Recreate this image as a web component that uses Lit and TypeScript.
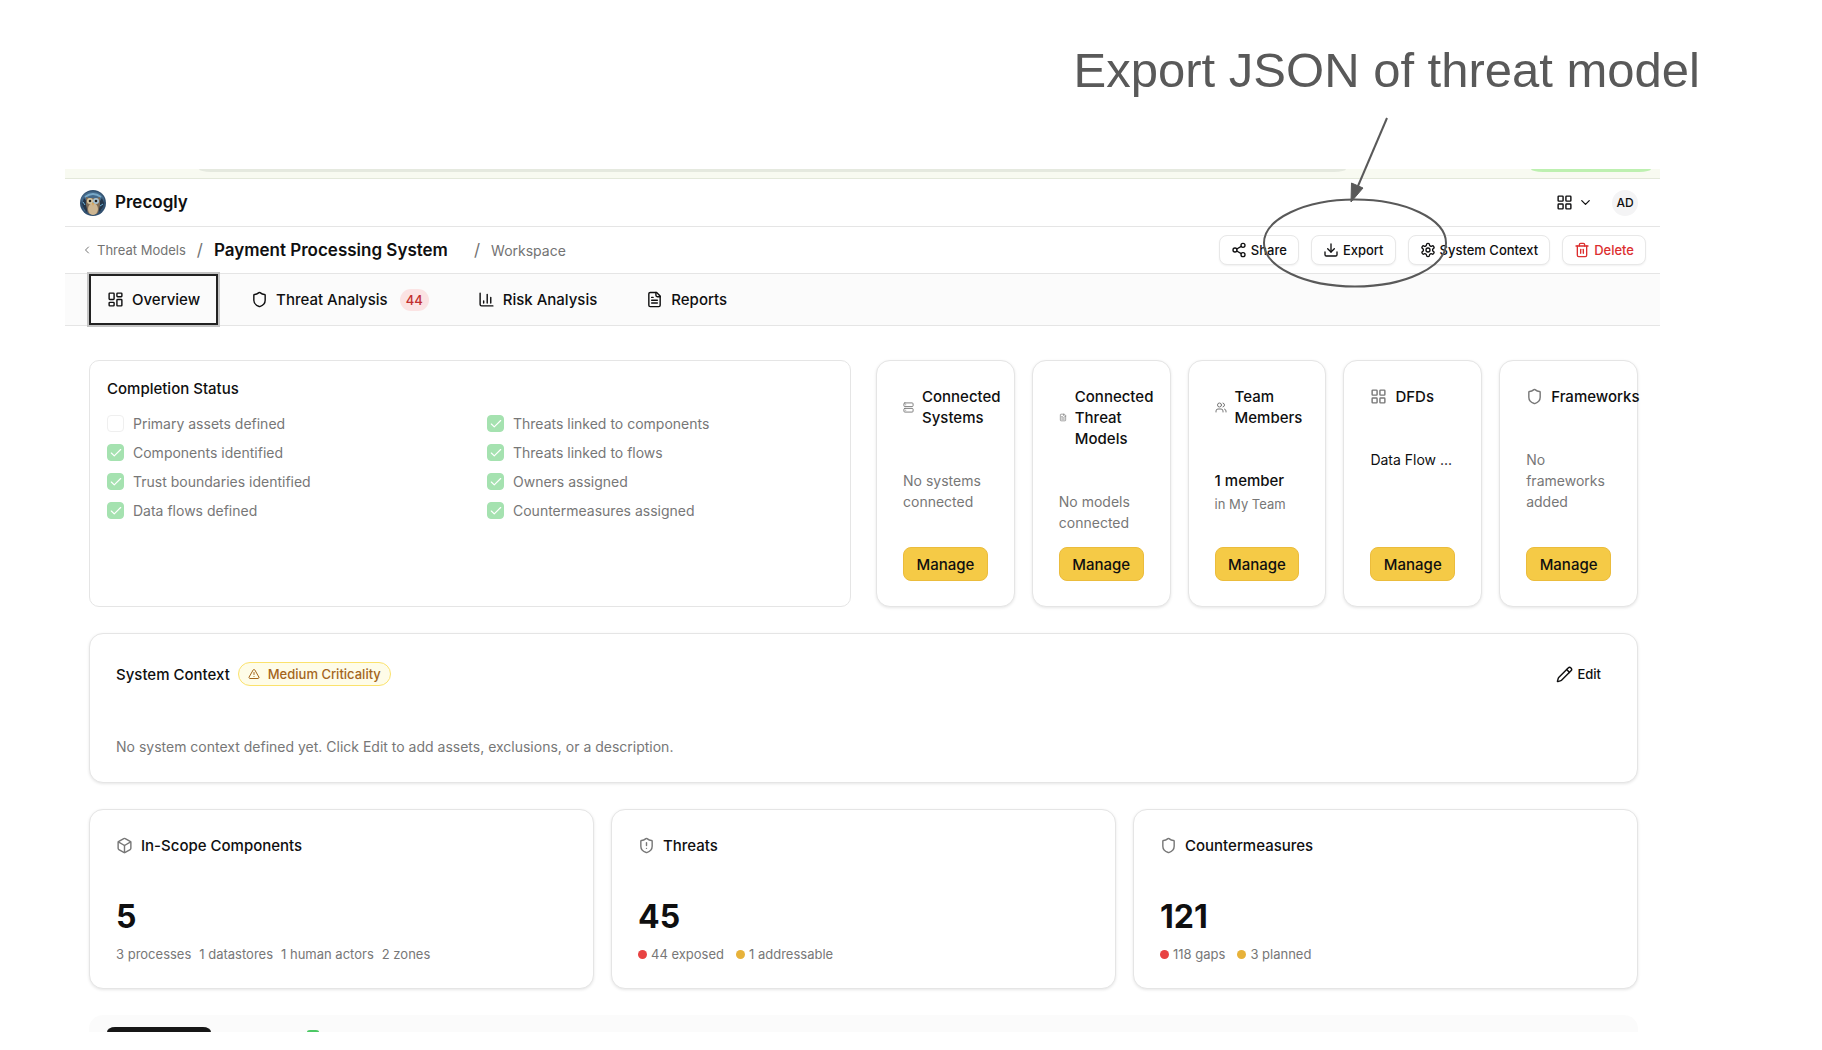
import { LitElement, html, svg, css, nothing } from "lit";
import { customElement, property } from "lit/decorators.js";

const ICONS: Record<string, unknown> = {
  dashboard: svg`<rect x="3" y="3" width="7" height="9" rx="1"/><rect x="14" y="3" width="7" height="5" rx="1"/><rect x="14" y="12" width="7" height="9" rx="1"/><rect x="3" y="16" width="7" height="5" rx="1"/>`,
  grid: svg`<rect x="3" y="3" width="7" height="7" rx="1"/><rect x="14" y="3" width="7" height="7" rx="1"/><rect x="14" y="14" width="7" height="7" rx="1"/><rect x="3" y="14" width="7" height="7" rx="1"/>`,
  shield: svg`<path d="M20 13c0 5-3.5 7.5-7.66 8.95a1 1 0 0 1-.67-.01C7.5 20.5 4 18 4 13V6a1 1 0 0 1 1-1c2 0 4.5-1.2 6.24-2.72a1.17 1.17 0 0 1 1.52 0C14.51 3.81 17 5 19 5a1 1 0 0 1 1 1z"/>`,
  shieldAlert: svg`<path d="M20 13c0 5-3.5 7.5-7.66 8.95a1 1 0 0 1-.67-.01C7.5 20.5 4 18 4 13V6a1 1 0 0 1 1-1c2 0 4.5-1.2 6.24-2.72a1.17 1.17 0 0 1 1.52 0C14.51 3.81 17 5 19 5a1 1 0 0 1 1 1z"/><path d="M12 8v4"/><path d="M12 16h.01"/>`,
  chart: svg`<path d="M3 3v16a2 2 0 0 0 2 2h16"/><path d="M18 17V9"/><path d="M13 17V5"/><path d="M8 17v-3"/>`,
  file: svg`<path d="M15 2H6a2 2 0 0 0-2 2v16a2 2 0 0 0 2 2h12a2 2 0 0 0 2-2V7Z"/><path d="M14 2v4a2 2 0 0 0 2 2h4"/><path d="M10 9H8"/><path d="M16 13H8"/><path d="M16 17H8"/>`,
  share: svg`<circle cx="18" cy="5" r="3"/><circle cx="6" cy="12" r="3"/><circle cx="18" cy="19" r="3"/><path d="m8.59 13.51 6.83 3.98"/><path d="m15.41 6.51-6.82 3.98"/>`,
  download: svg`<path d="M21 15v4a2 2 0 0 1-2 2H5a2 2 0 0 1-2-2v-4"/><path d="m7 10 5 5 5-5"/><path d="M12 15V3"/>`,
  settings: svg`<path d="M12.22 2h-.44a2 2 0 0 0-2 2v.18a2 2 0 0 1-1 1.73l-.43.25a2 2 0 0 1-2 0l-.15-.08a2 2 0 0 0-2.73.73l-.22.38a2 2 0 0 0 .73 2.73l.15.1a2 2 0 0 1 1 1.72v.51a2 2 0 0 1-1 1.74l-.15.09a2 2 0 0 0-.73 2.73l.22.38a2 2 0 0 0 2.73.73l.15-.08a2 2 0 0 1 2 0l.43.25a2 2 0 0 1 1 1.73V20a2 2 0 0 0 2 2h.44a2 2 0 0 0 2-2v-.18a2 2 0 0 1 1-1.73l.43-.25a2 2 0 0 1 2 0l.15.08a2 2 0 0 0 2.73-.73l.22-.39a2 2 0 0 0-.73-2.73l-.15-.08a2 2 0 0 1-1-1.74v-.5a2 2 0 0 1 1-1.74l.15-.09a2 2 0 0 0 .73-2.73l-.22-.38a2 2 0 0 0-2.73-.73l-.15.08a2 2 0 0 1-2 0l-.43-.25a2 2 0 0 1-1-1.73V4a2 2 0 0 0-2-2z"/><circle cx="12" cy="12" r="3"/>`,
  trash: svg`<path d="M3 6h18"/><path d="M19 6v14a2 2 0 0 1-2 2H7a2 2 0 0 1-2-2V6"/><path d="M8 6V4a2 2 0 0 1 2-2h4a2 2 0 0 1 2 2v2"/><path d="M10 11v6"/><path d="M14 11v6"/>`,
  server: svg`<rect x="2" y="2" width="20" height="8" rx="2"/><rect x="2" y="14" width="20" height="8" rx="2"/><path d="M6 6h.01"/><path d="M6 18h.01"/>`,
  users: svg`<path d="M16 21v-2a4 4 0 0 0-4-4H6a4 4 0 0 0-4 4v2"/><circle cx="9" cy="7" r="4"/><path d="M22 21v-2a4 4 0 0 0-3-3.87"/><path d="M16 3.13a4 4 0 0 1 0 7.75"/>`,
  alert: svg`<path d="m21.73 18-8-14a2 2 0 0 0-3.48 0l-8 14A2 2 0 0 0 4 21h16a2 2 0 0 0 1.73-3"/><path d="M12 9v4"/><path d="M12 17h.01"/>`,
  pencil: svg`<path d="M21.17 6.81a1 1 0 0 0-3.99-3.99L3.84 16.17a2 2 0 0 0-.5.83l-1.32 4.35a.5.5 0 0 0 .62.62l4.35-1.32a2 2 0 0 0 .83-.5z"/><path d="m15 5 4 4"/>`,
  box: svg`<path d="M21 8a2 2 0 0 0-1-1.73l-7-4a2 2 0 0 0-2 0l-7 4A2 2 0 0 0 3 8v8a2 2 0 0 0 1 1.73l7 4a2 2 0 0 0 2 0l7-4A2 2 0 0 0 21 16Z"/><path d="m3.3 7 8.7 5 8.7-5"/><path d="M12 22V12"/>`,
  chevronDown: svg`<path d="m6 9 6 6 6-6"/>`,
  chevronLeft: svg`<path d="m15 18-6-6 6-6"/>`,
  check: svg`<path d="M20 6 9 17l-5-5"/>`,
};

@customElement("ui-icon")
class UiIcon extends LitElement {
  @property() name = "";
  static styles = css`
    :host { display: block; flex: none; width: 17px; height: 17px; }
    svg { display: block; width: 100%; height: 100%; fill: none; stroke: currentColor;
      stroke-width: 2; stroke-linecap: round; stroke-linejoin: round; }
  `;
  render() {
    return html`<svg viewBox="0 0 24 24" aria-hidden="true">${ICONS[this.name]}</svg>`;
  }
}

const CHECKS: [string, boolean][] = [
  ["Primary assets defined", false],
  ["Threats linked to components", true],
  ["Components identified", true],
  ["Threats linked to flows", true],
  ["Trust boundaries identified", true],
  ["Owners assigned", true],
  ["Data flows defined", true],
  ["Countermeasures assigned", true],
];

const LINKS = [
  { icon: "server", size: "s11", title: "Connected Systems", body: html`<p class="muted">No systems connected</p>` },
  { icon: "file", size: "s8", title: "Connected Threat Models", body: html`<p class="muted">No models connected</p>` },
  { icon: "users", size: "s12", title: "Team Members", body: html`<p class="strong">1 member</p><p class="team">in My Team</p>` },
  { icon: "grid", size: "", title: "DFDs", body: html`<p class="flow">Data Flow ...</p>` },
  { icon: "shield", size: "", title: "Frameworks", body: html`<p class="muted">No frameworks added</p>` },
];

const STATS = [
  { icon: "box", title: "In-Scope Components", value: "5",
    parts: [["", "3 processes"], ["", "1 datastores"], ["", "1 human actors"], ["", "2 zones"]] },
  { icon: "shieldAlert", title: "Threats", value: "45", parts: [["red", "44 exposed"], ["amber", "1 addressable"]] },
  { icon: "shield", title: "Countermeasures", value: "121", parts: [["red", "118 gaps"], ["amber", "3 planned"]] },
];

@customElement("app-root")
class AppRoot extends LitElement {
  static styles = css`
    :host { display: block; background: #fff; color: #0f0f10;
      font: 400 15px/21px Inter, "Liberation Sans", sans-serif; }
    * { box-sizing: border-box; }
    h1, h2, p { margin: 0; padding: 0; font-size: inherit; font-weight: inherit; }
    button { font: inherit; color: inherit; background: none; border: 0; padding: 0; margin: 0; cursor: pointer; }
    a { color: inherit; text-decoration: none; }

    .callout { padding: 40px 122px 0 0; height: 169px; text-align: right; color: #595959;
      font: 400 49px/60px "Liberation Sans", Arial, sans-serif; }
    .window { position: relative; margin: 0 162px 18px 65px; }
    .pointer { position: absolute; top: -53px; right: 212px; width: 188px; height: 174px;
      fill: none; stroke: #595959; stroke-width: 2; pointer-events: none; }
    .pointer .head { fill: #595959; stroke-width: 1; }

    .strip { display: flex; justify-content: space-between; align-items: flex-start; height: 10px;
      padding: 0 9px 0 134px; background: #f8faf1; border-bottom: 1px solid #e3e8da; }
    .address { width: 79%; height: 3px; background: #e5e9df; border-radius: 0 0 12px 12px / 0 0 3px 3px; }
    .update { width: 120px; height: 3px; background: #bdf0b0; border-radius: 0 0 12px 12px / 0 0 3px 3px; }

    .bar { display: flex; align-items: center; justify-content: space-between; height: 48px;
      border-bottom: 1px solid #e5e5e5; }
    .trail { height: 47px; }
    .brand { display: flex; align-items: center; gap: 9px; padding-left: 15px; font-size: 17px; font-weight: 600; }
    .owl { display: block; width: 26px; height: 26px; }
    .account { display: flex; align-items: center; gap: 19px; padding-right: 22px; }
    .apps { display: flex; align-items: center; gap: 5px; }
    .chev { width: 15px; height: 15px; }
    .avatar { width: 26px; height: 26px; border-radius: 50%; background: #f4f4f5; text-align: center;
      font-size: 12px; line-height: 26px; font-weight: 500; }

    .crumbs { display: flex; align-items: center; padding-left: 16px; color: #737373; font-size: 14px; white-space: nowrap; }
    .back { display: flex; align-items: center; gap: 4px; font-size: 13px; }
    .tiny { width: 12px; height: 12px; }
    .slash { font-size: 17px; padding: 0 11px; }
    .crumbs h1 { font-size: 17px; font-weight: 600; color: #0f0f10; padding-right: 15px; }
    .actions { display: flex; gap: 12px; padding-right: 14px; }
    .action { display: flex; align-items: center; gap: 4px; height: 30px; padding: 0 11px; border: 1px solid #e8e8e8;
      border-radius: 8px; background: #fff; font-size: 13px; font-weight: 500; box-shadow: 0 1px 2px rgb(0 0 0 / 6%); white-space: nowrap; }
    .action ui-icon { width: 16px; height: 16px; }
    .danger { color: #dc2f2f; }

    .tabs { display: flex; gap: 17px; height: 52px; padding-left: 24px; background: #fbfbfb; border-bottom: 1px solid #e5e5e5; }
    .tab { display: flex; align-items: center; gap: 8px; padding: 0 16px; font-weight: 500; white-space: nowrap; }
    .current { outline: 2px solid #c4c4c4; border: 2px solid #222; }
    .count { margin-left: 4px; padding: 0 6px; border-radius: 11px; background: #fbe3e3; color: #c22f2f;
      font-size: 13px; line-height: 22px; }

    main { display: flex; flex-direction: column; gap: 26px; padding: 34px 22px 0 24px; }
    .top { display: grid; grid-template-columns: 1fr 1fr; gap: 25px; }
    .links { display: grid; grid-template-columns: repeat(5, minmax(0, 1fr)); gap: 17px; }
    .stats { display: grid; grid-template-columns: repeat(3, minmax(0, 1fr)); gap: 17px; }
    .status { border: 1px solid #e5e5e5; border-radius: 10px; padding: 17px; }
    .status h2, .card h2 { font-weight: 500; }
    .checks { display: grid; grid-template-columns: 1fr 1fr; gap: 8px 34px; margin-top: 14px; }
    .check { display: flex; align-items: center; gap: 9px; color: #777; font-size: 14px; }
    .tick { display: grid; place-items: center; width: 17px; height: 17px; }
    .tick > * { grid-area: 1 / 1; }
    .tick input { appearance: none; width: 17px; height: 17px; margin: 0; border: 1px solid #efefef; border-radius: 4px; }
    .tick input:checked { background: #a5e2b0; border-color: #a5e2b0; }
    .tick ui-icon { width: 14px; height: 14px; color: #fff; z-index: 1; pointer-events: none; }

    .card { display: flex; flex-direction: column; padding: 25px 26px; border: 1px solid #e5e5e5; border-radius: 14px;
      background: #fff; box-shadow: 0 1px 3px rgb(0 0 0 / 10%); }
    .heading { display: flex; align-items: center; gap: 8px; margin-bottom: 42px; }
    .heading > ui-icon { color: #777; }
    .links h2 { width: min-content; }
    .heading > .s11 { width: 11px; }
    .heading > .s8 { width: 8px; }
    .heading > .s12 { width: 12px; }
    .muted { color: #777; font-size: 14px; }
    .strong { font-weight: 500; }
    .flow { font-size: 14px; white-space: nowrap; }
    .team { margin-top: 4px; color: #777; font-size: 13px; line-height: 18px; }
    .body { flex: 1; padding-bottom: 14px; }
    .manage { height: 34px; border: 1px solid #ebbc3c; border-radius: 8px; background: #f5ca46; font-weight: 500; }

    .context { display: flex; align-items: center; gap: 8px; height: 30px; margin-bottom: 47px; }
    .level { display: flex; align-items: center; gap: 8px; height: 24px; padding: 0 9px; border: 1px solid #fbe26c;
      border-radius: 12px; background: #fefce8; color: #a4651c; font-size: 13px; font-weight: 500; }
    .edit { display: flex; align-items: center; gap: 4px; height: 28px; padding: 0 10px; margin-left: auto;
      font-size: 13px; font-weight: 500; }
    .value { font-size: 32px; line-height: 38px; font-weight: 700; }
    .parts { display: flex; gap: 8px; margin-top: 9px; color: #777; font-size: 13px; line-height: 18px; }
    .parts.dotted { gap: 12px; }
    .part { display: flex; align-items: center; gap: 4px; }
    .dot { width: 9px; height: 9px; border-radius: 50%; }
    .red { background: #e84343; }
    .amber { background: #e7b23a; }
    .next { display: flex; align-items: flex-end; gap: 96px; height: 17px; padding-left: 18px; background: #fbfbfb;
      border-radius: 14px 14px 0 0; }
    .dark { width: 104px; height: 5px; background: #171717; border-radius: 8px 8px 0 0 / 5px 5px 0 0; }
    .green { width: 12px; height: 2px; background: #4cc864; border-radius: 3px 3px 0 0 / 2px 2px 0 0; }
  `;

  private owl() {
    return html`<svg class="owl" viewBox="0 0 26 26" aria-hidden="true">
      <circle cx="13" cy="13" r="13" fill="#31506f"/>
      <path d="M1 9A13 13 0 0 1 24 8L22 20 4 21Z" fill="#44698a"/>
      <path d="M2 14q2 6 5 8l1-9-4-5zM24 13q-1 6-5 9l-1-8 4-6z" fill="#233549"/>
      <path d="M5 7q8-6 16 0" fill="none" stroke="#78a9c8" stroke-width="2"/>
      <path d="M6 7l3 1h8l3-1 0 8-2 8q-5 3-10 0L6 15z" fill="#7d6a55"/>
      <ellipse cx="13" cy="19" rx="5" ry="6" fill="#cdb692"/>
      <circle cx="10" cy="11" r="3" fill="#d8c8a2"/><circle cx="16" cy="11" r="3" fill="#a9c4d4"/>
      <circle cx="10" cy="11" r="1.300" fill="#26211f"/><circle cx="16" cy="11" r="1.300" fill="#26211f"/>
      <path d="M12 13h2l-1 3z" fill="#dca04a"/>
      <path d="M20 16l3-2M3 12l2 3" stroke="#6fb3d9" stroke-width="1"/>
    </svg>`;
  }

  render() {
    return html`
      <p class="callout">Export JSON of threat model</p>
      <div class="window">
        <div class="strip"><div class="address"></div><div class="update"></div></div>
        <header class="bar">
          <a class="brand" href="#">${this.owl()}<span>Precogly</span></a>
          <div class="account">
            <button class="apps" aria-label="Apps"><ui-icon name="grid"></ui-icon><ui-icon class="chev" name="chevronDown"></ui-icon></button>
            <button class="avatar">AD</button>
          </div>
        </header>
        <div class="bar trail">
          <nav class="crumbs" aria-label="Breadcrumb">
            <a class="back" href="#"><ui-icon class="tiny" name="chevronLeft"></ui-icon>Threat Models</a>
            <span class="slash">/</span>
            <h1>Payment Processing System</h1>
            <span class="slash">/</span>
            <a href="#">Workspace</a>
          </nav>
          <div class="actions">
            <button class="action"><ui-icon name="share"></ui-icon>Share</button>
            <button class="action"><ui-icon name="download"></ui-icon>Export</button>
            <button class="action"><ui-icon name="settings"></ui-icon>System Context</button>
            <button class="action danger"><ui-icon name="trash"></ui-icon>Delete</button>
          </div>
        </div>
        <div class="tabs" role="tablist">
          <button class="tab current" role="tab" aria-selected="true"><ui-icon name="dashboard"></ui-icon>Overview</button>
          <button class="tab" role="tab"><ui-icon name="shield"></ui-icon>Threat Analysis<span class="count">44</span></button>
          <button class="tab" role="tab"><ui-icon name="chart"></ui-icon>Risk Analysis</button>
          <button class="tab" role="tab"><ui-icon name="file"></ui-icon>Reports</button>
        </div>
        <main>
          <div class="top">
            <section class="status">
              <h2>Completion Status</h2>
              <div class="checks">
                ${CHECKS.map(([label, on]) => html`<label class="check">
                  <span class="tick"><input type="checkbox" .checked=${on} disabled>${on ? html`<ui-icon name="check"></ui-icon>` : nothing}</span>
                  ${label}</label>`)}
              </div>
            </section>
            <div class="links">
              ${LINKS.map((l) => html`<section class="card">
                <div class="heading"><ui-icon class=${l.size} name=${l.icon}></ui-icon><h2>${l.title}</h2></div>
                <div class="body">${l.body}</div>
                <button class="manage">Manage</button>
              </section>`)}
            </div>
          </div>
          <section class="card">
            <div class="context">
              <h2>System Context</h2>
              <span class="level"><ui-icon class="tiny" name="alert"></ui-icon>Medium Criticality</span>
              <button class="edit"><ui-icon name="pencil"></ui-icon>Edit</button>
            </div>
            <p class="muted">No system context defined yet. Click Edit to add assets, exclusions, or a description.</p>
          </section>
          <div class="stats">
            ${STATS.map((s) => html`<section class="card">
              <div class="heading"><ui-icon name=${s.icon}></ui-icon><h2>${s.title}</h2></div>
              <p class="value">${s.value}</p>
              <div class="parts ${s.parts[0][0] ? "dotted" : ""}">
                ${s.parts.map(([tone, text]) => html`<span class="part">${tone ? html`<span class="dot ${tone}"></span>` : nothing}${text}</span>`)}
              </div>
            </section>`)}
          </div>
          <div class="next"><div class="dark"></div><div class="green"></div></div>
        </main>
        <svg class="pointer" viewBox="0 0 188 174" aria-hidden="true">
          <ellipse cx="95" cy="127" rx="91" ry="43.500"/>
          <path d="M127 2 98 70"/>
          <path class="head" d="M91 86 91.500 67 103 72Z"/>
        </svg>
      </div>
    `;
  }
}
